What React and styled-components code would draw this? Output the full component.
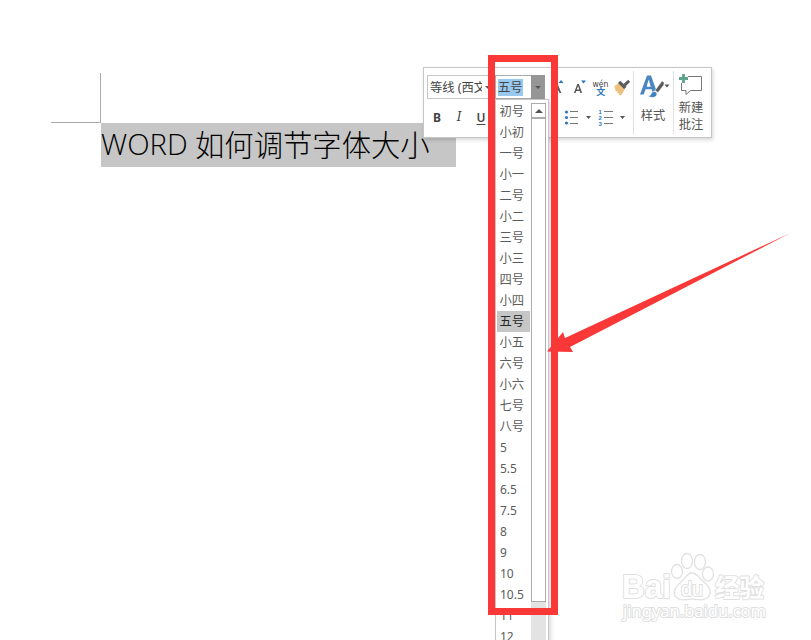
import React from "react";
import styled, { createGlobalStyle } from "styled-components";

const RED = "#fb3838";
const UI_FONT = '"Noto Sans", "Noto Sans CJK SC", sans-serif';

const GlobalStyle = createGlobalStyle`
  * { box-sizing: border-box; }
  body { margin: 0; background: #fff; overflow: hidden; }
`;

const Page = styled.main`
  position: relative;
  width: 811px;
  height: 640px;
  overflow: hidden;
  background: #fff;
  font-family: ${UI_FONT};
  padding: 73px 0 0 51px;
`;

const MarginCorner = styled.div`
  width: 50px;
  height: 50px;
  border-right: 1px solid #ababab;
  border-bottom: 1px solid #ababab;
`;

const SelectedHeading = styled.h1`
  display: flex;
  align-items: flex-start;
  gap: 7px;
  margin: 0 0 0 50px;
  width: 355px;
  height: 44px;
  background: #c6c6c6;
  color: #000;
  font-weight: 300;
  white-space: nowrap;
`;

const Latin = styled.span`
  width: 87px;
  font: 300 29.3px/42px "Open Sans", "Noto Sans", sans-serif;
  letter-spacing: 0;
`;

const Han = styled.span`
  font: 300 29.33px/40px "Noto Sans CJK SC", sans-serif;
`;

const MiniToolbar = styled.section`
  position: absolute;
  left: 423px;
  top: 67px;
  width: 289px;
  height: 71px;
  display: flex;
  border: 1px solid #c6c6c6;
  background: #fff;
  box-shadow: 1px 2px 4px rgba(0, 0, 0, 0.16);
`;

const ToolGrid = styled.div`
  display: grid;
  grid-template-rows: 38px 22px;
  width: 209px;
  align-content: start;
`;

const ToolRow = styled.div`
  display: flex;
  align-items: center;
  padding-left: ${(p) => p.$inset}px;
`;

const FontBox = styled.div`
  display: flex;
  align-items: center;
  width: 68px;
  height: 24px;
  border: 1px solid #c6c6c6;
  padding-left: 2px;
  color: #444;
  font-size: 12.3px;
`;

const FontName = styled.span`
  width: 52px;
  margin-right: 3px;
  overflow: hidden;
  white-space: nowrap;
`;

const SizeBox = styled.div`
  display: flex;
  align-items: center;
  justify-content: space-between;
  width: 50px;
  height: 24px;
  border: 1px solid #ababab;
  border-right: 0;
  padding-left: 2px;
`;

const SizeValue = styled.span`
  width: 25px;
  height: 17px;
  background: #99c9ef;
  color: #444;
  font-size: 12.3px;
  line-height: 17px;
  white-space: nowrap;
`;

const SizeButton = styled.span`
  display: grid;
  place-items: center;
  width: 14px;
  height: 24px;
  background: #969696;
  flex: none;
`;

const Caret = styled.i`
  flex: none;
  border: ${(p) => p.$size || 3}px solid transparent;
  border-bottom-width: 0;
  border-top-color: #555;
  transform: ${(p) => (p.$up ? "rotate(180deg)" : "none")};
`;

const Letter = styled.span`
  width: 22px;
  text-align: center;
  color: #444;
  font: ${(p) => p.$face};
  text-decoration: ${(p) => (p.$underline ? "underline" : "none")};
  text-underline-offset: 2px;
`;

const ToolIcons = styled.svg`
  display: block;
  flex: none;
  margin-left: ${(p) => p.$gap || 0}px;
`;

const Command = styled.div`
  display: flex;
  flex-direction: column;
  align-items: center;
  width: ${(p) => p.$width}px;
  height: 63px;
  margin-top: 3px;
  border-left: 1px solid #e1e1e1;
  color: #555;
  font-size: 12.3px;
  line-height: 17px;
`;

const CommandLabel = styled.span`
  margin-top: ${(p) => p.$gap}px;
  margin-right: ${(p) => p.$shift || 0}px;
  text-align: center;
  white-space: nowrap;
`;

const SizeMenu = styled.div`
  position: absolute;
  left: 495px;
  top: 99px;
  width: 54px;
  height: 560px;
  display: flex;
  border: 1px solid #c6c6c6;
  background: #fff;
  box-shadow: 2px 2px 4px rgba(0, 0, 0, 0.15);
  padding: 1px 0 0 1px;
`;

const Options = styled.ul`
  width: 33px;
  margin: 0;
  padding: 0;
  list-style: none;
`;

const Option = styled.li`
  height: 21px;
  padding-left: ${(p) => (p.$number ? 3 : 2.5)}px;
  background: ${(p) => (p.$active ? "#c6c6c6" : "transparent")};
  color: ${(p) => (p.$active ? "#262626" : "#5c5c5c")};
  font-size: ${(p) => (p.$number ? 12 : 12.3)}px;
  line-height: ${(p) => (p.$number ? 21 : 22)}px;
  white-space: nowrap;
`;

const Scrollbar = styled.div`
  width: 15px;
  margin: 2px 0 0 1px;
  background: #e3e3e3;
`;

const ScrollUp = styled.div`
  display: grid;
  place-items: center;
  height: 15px;
  border: 1px solid #ababab;
  background: #fff;
`;

const ScrollThumb = styled.div`
  height: 484px;
  border: 1px solid #ababab;
  background: #fff;
`;

const Highlight = styled.div`
  position: absolute;
  left: 488px;
  top: 55px;
  width: 70px;
  height: 560px;
  border: 7px solid ${RED};
`;

const Pointer = styled.svg`
  position: absolute;
  left: 540px;
  top: 225px;
`;

const Watermark = styled.svg`
  position: absolute;
  left: 615px;
  top: 548px;
`;

const sizes = [
  "初号", "小初", "一号", "小一", "二号", "小二", "三号", "小三",
  "四号", "小四", "五号", "小五", "六号", "小六", "七号", "八号",
  "5", "5.5", "6.5", "7.5", "8", "9", "10", "10.5", "11", "12",
];

function ScaleAndFormatIcons() {
  return (
    <ToolIcons $gap={5} width="82" height="28" viewBox="550 73 82 28">
      <path fillRule="evenodd" d="M552.500 93 556 84h1.700l3.600 9h-1.800l-.8-2.200h-3.400l-.8 2.200zm3.300-3.600h2.400l-1.200-3.600z" fill="#555" />
      <path d="m558.500 83 2.500-3 2.500 3z" fill="#2e75b6" />
      <path fillRule="evenodd" d="M574 93 577.300 84h1.600l3.200 9h-1.700l-.7-2.100h-3.400l-.7 2.100zm2.700-3.400h2.600l-1.200-3.600z" fill="#555" />
      <path d="M581 80.500h5l-2.500 3z" fill="#2e75b6" />
      <path d="m614.500 86 4.500-3 6 6-4 6.500-2.400-1 .9-1.800-2.500.7.700-2.200-2 .2z" fill="#edc17c" />
      <path d="m618 83 2.200-2.200 6.300 6-2.300 2.300z" fill="#5a5a5a" />
      <path d="m623.500 84 4.700-4.200 1.900 1.900-4.400 4.500z" fill="#5a5a5a" />
      <text x="592.500" y="86.500" fill="#444" fontFamily="DejaVu Sans, sans-serif" fontSize="8.500" textLength="16" lengthAdjust="spacingAndGlyphs">wén</text>
      <text x="596.200" y="95" fill="#2e75b6" fontFamily="Noto Sans CJK SC, sans-serif" fontSize="9" fontWeight="700">文</text>
    </ToolIcons>
  );
}

function ListIcons() {
  return (
    <ToolIcons $gap={71} width="66" height="20" viewBox="563 107 66 20">
      {[112, 117.5, 123].map((y) => (
        <circle key={y} cx="566.500" cy={y} r="1.600" fill="#3478b8" />
      ))}
      <path d="M570 111.500h8M570 117.500h8M570 123.500h8M604 111.500h9M604 117.500h9M604 123.500h9" stroke="#777" />
      <path d="M586 116h5l-2.500 3zM620 116h5l-2.500 3z" fill="#555" />
      {[1, 2, 3].map((n) => (
        <text key={n} x="598.500" y={108.500 + n * 5.900} fontSize="6" fontWeight="700" fill="#3478b8" fontFamily="Liberation Sans, sans-serif">{n}</text>
      ))}
    </ToolIcons>
  );
}

function StyleIcon() {
  return (
    <ToolIcons width="34" height="30" viewBox="638.5 70.5 34 30">
      <path fillRule="evenodd" d="M641.500 94 648.500 75h4l5 14-3.300 3-1.100-3.300h-6l-1.900 5.300zm6.500-7.800h4.300l-2.100-7.200z" fill="#4a86c0" />
      <path d="M652 94.500c1-3.500 4-4.500 6-2.500 1.500 2-.500 5-4 5-2.500 0-4-.800-5-2 1.300.500 2.200.500 3-.500z" fill="#3f80bd" stroke="#fff" strokeWidth=".7" />
      <path d="m656.500 90 7-9.500 2.200 1.500-.4 2.500-5.800 7.500z" fill="#5b5b5b" stroke="#fff" strokeWidth=".5" />
      <path d="M666 84h5l-2.500 3z" fill="#555" />
    </ToolIcons>
  );
}

function CommentIcon() {
  return (
    <ToolIcons width="34" height="28" viewBox="676 71 34 28">
      <path d="M688 76.500h13.500v14h-11l-4.500 4v-4h-4.500V83" fill="none" stroke="#777" />
      <path d="M679 78.500h9M683.500 74v9" stroke="#5da48b" strokeWidth="2.800" />
    </ToolIcons>
  );
}

function BaiduMark() {
  return (
    <Watermark width="160" height="80" viewBox="615 548 160 80">
      <g fill="#fff" stroke="#e1e1e1" strokeWidth="1.300">
        <ellipse cx="677" cy="571.500" rx="5.500" ry="7" />
        <ellipse cx="687" cy="561" rx="5.500" ry="7.500" />
        <ellipse cx="700" cy="562" rx="5.500" ry="7.500" />
        <ellipse cx="708" cy="574" rx="5.500" ry="7" />
        <path d="M692 573c5 0 7 5 12 9 5 4 8 9 5 14-3 5-9 4-17 3-8 1-14 2-17-3-2-5 1-10 6-14s6-9 11-9z" />
      </g>
      <g fill="#fff" stroke="#dfdfdf" strokeWidth="2" paintOrder="stroke" strokeLinejoin="round">
        <text x="622" y="598" fontFamily="Liberation Sans, sans-serif" fontWeight="700" fontSize="33" textLength="49" lengthAdjust="spacingAndGlyphs">Bai</text>
        <text x="681" y="596" fontFamily="Liberation Sans, sans-serif" fontSize="20" textLength="22" lengthAdjust="spacingAndGlyphs">du</text>
        <text x="715" y="597" fontFamily="Noto Sans CJK SC, sans-serif" fontWeight="700" fontSize="25" textLength="49" lengthAdjust="spacingAndGlyphs">经验</text>
        <text x="623" y="617" fontFamily="Noto Sans, sans-serif" fontSize="16" textLength="143" lengthAdjust="spacingAndGlyphs">jingyan.baidu.com</text>
      </g>
    </Watermark>
  );
}

export default function App() {
  return (
    <Page>
      <GlobalStyle />
      <MarginCorner />
      <SelectedHeading>
        <Latin>WORD</Latin>
        <Han>如何调节字体大小</Han>
      </SelectedHeading>

      <MiniToolbar>
        <ToolGrid>
          <ToolRow $inset={3}>
            <FontBox>
              <FontName>等线 (西文</FontName>
              <Caret />
            </FontBox>
            <SizeBox>
              <SizeValue>五号</SizeValue>
              <SizeButton><Caret /></SizeButton>
            </SizeBox>
            <ScaleAndFormatIcons />
          </ToolRow>
          <ToolRow $inset={2}>
            <Letter $face='700 12px "Noto Sans", sans-serif'>B</Letter>
            <Letter $face='italic 12px "DejaVu Serif", "Liberation Serif", serif'>I</Letter>
            <Letter $face='600 12px "Noto Sans", sans-serif' $underline>U</Letter>
            <ListIcons />
          </ToolRow>
        </ToolGrid>
        <Command $width={40}>
          <StyleIcon />
          <CommandLabel $gap={6} $shift={1}>样式</CommandLabel>
        </Command>
        <Command $width={38}>
          <CommentIcon />
          <CommandLabel $gap={0} $shift={3}>新建<br />批注</CommandLabel>
        </Command>
      </MiniToolbar>

      <SizeMenu>
        <Options>
          {sizes.map((size) => (
            <Option key={size} $active={size === "五号"} $number={/^\d/.test(size)}>
              {size}
            </Option>
          ))}
        </Options>
        <Scrollbar>
          <ScrollUp><Caret $up $size={4} /></ScrollUp>
          <ScrollThumb />
        </Scrollbar>
      </SizeMenu>

      <BaiduMark />
      <Highlight />
      <Pointer width="255" height="135" viewBox="540 225 255 135">
        <path d="M790.500 233 570 347l3 5-26-.5L563 332l2 6z" fill={RED} />
      </Pointer>
    </Page>
  );
}
